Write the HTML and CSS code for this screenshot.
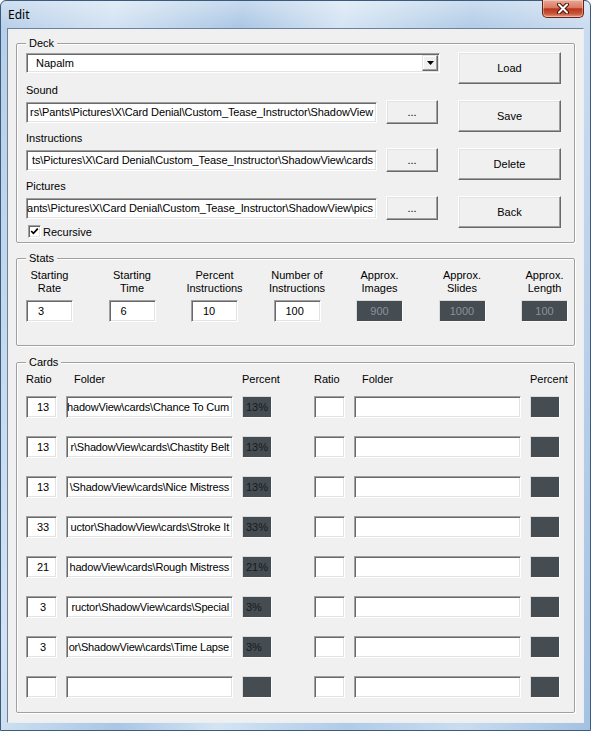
FILE: index.html
```html
<!DOCTYPE html>
<html lang="en">
<head>
    <meta charset="UTF-8">
    <title>Edit</title>
    <link rel="stylesheet" href="styles.css">
</head>
<body>
<div class="window">
    <div class="titlebar">
        <span class="title">Edit</span>
        <button class="close" type="button">
            <svg width="14" height="11" viewBox="0 0 14 11">
                <path d="M3 1.5 L11 9.5 M11 1.5 L3 9.5" stroke="#4a140a" stroke-width="4" stroke-linecap="round"/>
                <path d="M3 1.5 L11 9.5 M11 1.5 L3 9.5" stroke="#fff" stroke-width="2" stroke-linecap="round"/>
            </svg>
        </button>
    </div>

    <div class="client">
        <!-- Deck -->
        <fieldset class="group deck">
            <legend>Deck</legend>
            <div class="deck-body">
                <div class="deck-fields">
                    <div class="combo">
                        <span class="combo-text">Napalm</span>
                        <span class="combo-arrow">
                            <svg width="7" height="4" viewBox="0 0 7 4"><path d="M0 0 H7 L3.5 4 Z" fill="#000"/></svg>
                        </span>
                    </div>

                    <div class="field-label">Sound</div>
                    <div class="path-row">
                        <div class="textbox path"><span>rs\Pants\Pictures\X\Card Denial\Custom_Tease_Instructor\ShadowView</span></div>
                        <button class="btn browse" type="button">...</button>
                    </div>

                    <div class="field-label">Instructions</div>
                    <div class="path-row">
                        <div class="textbox path"><span>ts\Pictures\X\Card Denial\Custom_Tease_Instructor\ShadowView\cards</span></div>
                        <button class="btn browse" type="button">...</button>
                    </div>

                    <div class="field-label">Pictures</div>
                    <div class="path-row">
                        <div class="textbox path"><span>ants\Pictures\X\Card Denial\Custom_Tease_Instructor\ShadowView\pics</span></div>
                        <button class="btn browse" type="button">...</button>
                    </div>

                    <label class="check">
                        <span class="checkbox">
                            <svg width="9" height="9" viewBox="0 0 9 9"><path d="M1.2 4 L3.4 6.3 L7.8 1.6" stroke="#000" stroke-width="1.7" fill="none"/></svg>
                        </span>
                        Recursive
                    </label>
                </div>

                <div class="deck-buttons">
                    <button class="btn big" type="button">Load</button>
                    <button class="btn big" type="button">Save</button>
                    <button class="btn big" type="button">Delete</button>
                    <button class="btn big" type="button">Back</button>
                </div>
            </div>
        </fieldset>

        <!-- Stats -->
        <fieldset class="group stats-group">
            <legend>Stats</legend>
            <div class="stats">
                <div class="stat"><div class="stat-head">Starting<br>Rate</div><div class="textbox stat-box">3</div></div>
                <div class="stat"><div class="stat-head">Starting<br>Time</div><div class="textbox stat-box">6</div></div>
                <div class="stat"><div class="stat-head">Percent<br>Instructions</div><div class="textbox stat-box">10</div></div>
                <div class="stat"><div class="stat-head">Number of<br>Instructions</div><div class="textbox stat-box">100</div></div>
                <div class="stat"><div class="stat-head">Approx.<br>Images</div><div class="dark stat-box">900</div></div>
                <div class="stat"><div class="stat-head">Approx.<br>Slides</div><div class="dark stat-box">1000</div></div>
                <div class="stat"><div class="stat-head">Approx.<br>Length</div><div class="dark stat-box">100</div></div>
            </div>
        </fieldset>

        <!-- Cards -->
        <fieldset class="group cards-group">
            <legend>Cards</legend>
            <div class="cards">
                <div class="cards-half">
                    <div class="cards-head"><span>Ratio</span><span class="head-folder">Folder</span><span>Percent</span></div>
                    <div class="cards-rows">
                        <div class="textbox ratio">13</div><div class="textbox path folder"><span>hadowView\cards\Chance To Cum</span></div><div class="dark pct">13%</div>
                        <div class="textbox ratio">13</div><div class="textbox path folder"><span>r\ShadowView\cards\Chastity Belt</span></div><div class="dark pct">13%</div>
                        <div class="textbox ratio">13</div><div class="textbox path folder"><span>\ShadowView\cards\Nice Mistress</span></div><div class="dark pct">13%</div>
                        <div class="textbox ratio">33</div><div class="textbox path folder"><span>uctor\ShadowView\cards\Stroke It</span></div><div class="dark pct">33%</div>
                        <div class="textbox ratio">21</div><div class="textbox path folder"><span>hadowView\cards\Rough Mistress</span></div><div class="dark pct">21%</div>
                        <div class="textbox ratio">3</div><div class="textbox path folder"><span>ructor\ShadowView\cards\Special</span></div><div class="dark pct">3%</div>
                        <div class="textbox ratio">3</div><div class="textbox path folder"><span>or\ShadowView\cards\Time Lapse</span></div><div class="dark pct">3%</div>
                        <div class="textbox ratio"></div><div class="textbox path folder"></div><div class="dark pct"></div>
                    </div>
                </div>
                <div class="cards-half">
                    <div class="cards-head"><span>Ratio</span><span class="head-folder">Folder</span><span>Percent</span></div>
                    <div class="cards-rows">
                        <div class="textbox ratio"></div><div class="textbox path folder"></div><div class="dark pct"></div>
                        <div class="textbox ratio"></div><div class="textbox path folder"></div><div class="dark pct"></div>
                        <div class="textbox ratio"></div><div class="textbox path folder"></div><div class="dark pct"></div>
                        <div class="textbox ratio"></div><div class="textbox path folder"></div><div class="dark pct"></div>
                        <div class="textbox ratio"></div><div class="textbox path folder"></div><div class="dark pct"></div>
                        <div class="textbox ratio"></div><div class="textbox path folder"></div><div class="dark pct"></div>
                        <div class="textbox ratio"></div><div class="textbox path folder"></div><div class="dark pct"></div>
                        <div class="textbox ratio"></div><div class="textbox path folder"></div><div class="dark pct"></div>
                    </div>
                </div>
            </div>
        </fieldset>
    </div>
</div>
</body>
</html>
```

FILE: styles.css
```css
* { box-sizing: border-box; }
html, body { margin: 0; }
body { width: 591px; height: 731px; font-family: "Liberation Sans", Arial, sans-serif; font-size: 11px; color: #000; background: #fff; overflow: hidden; }

/* window frame (Vista glass look) */
.window { width: 591px; height: 731px; display: flex; flex-direction: column; border: 1px solid #3a5a7e; border-radius: 6px 6px 0 0;
    background: linear-gradient(180deg, rgba(255,255,255,0.35), rgba(255,255,255,0) 28px),
                linear-gradient(100deg, #b6cee8 0%, #d2e2f2 16%, #aac6e4 34%, #d4e4f3 48%, #b1cbe7 66%, #cadcef 82%, #a3c1e1 100%); }
.titlebar { height: 27px; display: flex; justify-content: space-between; align-items: flex-start; padding-left: 7px; }
.title { font-family: "Noto Sans", "Open Sans", sans-serif; font-size: 12px; line-height: 28px; }
.close { width: 42px; height: 18px; margin: -1px 6px 0 0; padding: 0; display: flex; align-items: center; justify-content: center; border: 1px solid #6b2214; border-top: none; border-radius: 0 0 5px 5px;
    background: linear-gradient(180deg, #eaa896 0%, #d97a62 45%, #bb3519 52%, #c9553a 80%, #e39a80 100%); box-shadow: inset 0 0 0 1px rgba(255,255,255,0.35); }

.client { flex: 1; margin: 0 6px 7px; padding: 0 8px; background: #f0f0f0; border: 1px solid; border-color: #6d8299 #e6eef6 #e6eef6 #6d8299; }

/* group boxes */
.group { margin: 7px 0 0; border: 1px solid #a0a0a0; border-radius: 2px; box-shadow: inset 1px 1px 0 #fff, 1px 1px 0 #fff; min-width: 0; }
.group legend { padding: 0 3px; line-height: 14px; background: #f0f0f0; }
.deck { padding: 2px 12px 3px 9px; }
.stats-group { margin-top: 8px; padding: 4px 5px 23px 9px; }
.cards-group { margin-top: 9px; padding: 4px 12px 14px 9px; }

/* sunken / raised controls */
.textbox { background: #fff; border: 1px solid; border-color: #a0a0a0 #fff #fff #a0a0a0; box-shadow: inset 1px 1px 0 #696969, inset -1px -1px 0 #e3e3e3; }
.btn { font: inherit; color: #000; padding: 0; background: #f0f0f0; border: 1px solid; border-color: #fff #696969 #696969 #fff; box-shadow: inset -1px -1px 0 #a0a0a0, inset 1px 1px 0 #e3e3e3; }
.dark { background: #454d52; border: 1px solid; border-color: #dadada #fafafa #fafafa #dadada; }

/* deck */
.deck-body { display: flex; }
.deck-fields { width: 414px; }
.deck-buttons { width: 103px; margin-left: 18px; display: flex; flex-direction: column; gap: 16px; }
.btn.big { height: 32px; }

.combo { margin-top: 1px; height: 20px; display: flex; align-items: center; background: #fff; border: 1px solid; border-color: #a0a0a0 #fff #fff #a0a0a0; box-shadow: inset 1px 1px 0 #696969, inset -1px -1px 0 #e3e3e3; padding: 1px 1px 1px 9px; }
.combo-text { flex: 1; }
.combo-arrow { width: 16px; height: 16px; display: flex; align-items: center; justify-content: center; background: #f0f0f0; border: 1px solid; border-color: #e3e3e3 #696969 #696969 #e3e3e3; box-shadow: inset -1px -1px 0 #a0a0a0, inset 1px 1px 0 #fff; }

.field-label { margin-top: 11px; margin-bottom: 3px; line-height: 13px; }
.path-row + .field-label { margin-top: 8px; }
.path-row { display: flex; align-items: center; height: 24px; }
.path { display: flex; align-items: center; justify-content: flex-end; overflow: hidden; white-space: nowrap; padding: 0 3px 0 2px; }
.path-row .path { width: 351px; height: 21px; letter-spacing: -0.1px; }
.browse { width: 52px; height: 24px; margin-left: 9px; }

.check { display: flex; align-items: center; margin-top: 4px; height: 15px; padding-left: 2px; }
.checkbox { width: 13px; height: 13px; margin-right: 2px; display: flex; align-items: center; justify-content: center; background: #fff; border: 1px solid; border-color: #a0a0a0 #fff #fff #a0a0a0; box-shadow: inset 1px 1px 0 #696969, inset -1px -1px 0 #e3e3e3; }

/* stats */
.stats { display: flex; justify-content: space-between; width: 542px; }
.stat { width: 47px; display: flex; flex-direction: column; align-items: center; }
.stat-head { white-space: nowrap; text-align: center; line-height: 13px; }
.stat-box { align-self: stretch; height: 22px; margin-top: 5px; line-height: 20px; }
.textbox.stat-box { padding-left: 11px; }
.dark.stat-box { text-align: center; color: #8b9297; }

/* cards */
.cards { display: flex; gap: 42px; }
.cards-head, .cards-rows { display: grid; grid-template-columns: 31px 167px 30px; column-gap: 9px; }
.cards-head { line-height: 13px; white-space: nowrap; margin-bottom: 10px; }
.head-folder { padding-left: 8px; }
.cards-rows { row-gap: 18px; grid-auto-rows: 22px; }
.ratio { text-align: center; line-height: 20px; padding-left: 3px; }
.folder { padding-right: 3px; letter-spacing: -0.2px; }
.pct { line-height: 20px; padding-left: 3px; color: #161a1c; white-space: nowrap; overflow: hidden; }
```
